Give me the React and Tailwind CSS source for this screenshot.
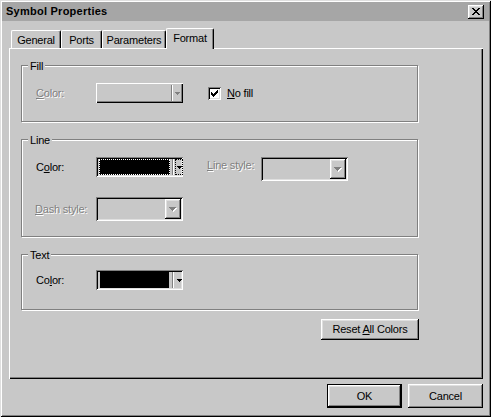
import React from "react";

const RAISED =
  "shadow-[inset_-1px_-1px_0_#000,inset_1px_1px_0_#fff,inset_-2px_-2px_0_#808080,inset_2px_2px_0_#dfdfdf]";
const SUNKEN =
  "shadow-[inset_1px_1px_0_#808080,inset_-1px_-1px_0_#fff,inset_2px_2px_0_#000,inset_-2px_-2px_0_#dfdfdf]";
const DIS = "text-[#808080] [text-shadow:1px_1px_0_#fff]";

function SmallArrow({ color = "#000" }) {
  return (
    <svg width="5" height="3" viewBox="0 0 5 3" shapeRendering="crispEdges" className="block">
      <path d="M0 0h5v1h-5z M1 1h3v1h-3z M2 2h1v1h-1z" fill={color} />
    </svg>
  );
}

function BigArrowDisabled() {
  const d = "M0 0h7v1h-7z M1 1h5v1h-5z M2 2h3v1h-3z M3 3h1v1h-1z";
  return (
    <svg width="8" height="5" viewBox="0 0 8 5" shapeRendering="crispEdges" className="block">
      <path d={d} fill="#fff" transform="translate(1 1)" />
      <path d={d} fill="#808080" />
    </svg>
  );
}

function ColorCombo({ focused }) {
  return (
    <div className={`w-[87px] h-[20px] ${SUNKEN} flex items-center`}>
      <div
        className={`ml-[3px] w-[71px] h-[16px] bg-black ${
          focused ? "border border-dotted border-white" : "border border-[#c8c8c8] border-y-0"
        }`}
      />
      <div className="ml-[2px] w-[2px] h-[16px] border-l border-l-[#808080] border-r border-r-white" />
      <div
        className={`ml-[1px] h-[16px] w-[8px] flex items-center justify-center ${
          focused ? "border border-dotted border-black" : ""
        }`}
      >
        <SmallArrow />
      </div>
    </div>
  );
}

function DisabledColorCombo() {
  return (
    <div className="w-[87px] h-[20px] shadow-[inset_1px_1px_0_#fff,inset_-1px_-1px_0_#000,inset_-2px_-2px_0_#808080] flex items-center">
      <div className="ml-[75px] w-[2px] h-[16px] border-l border-l-[#808080] border-r border-r-white" />
      <div className="ml-[2px]">
        <SmallArrow color="#808080" />
      </div>
    </div>
  );
}

function StdCombo() {
  return (
    <div className={`w-[87px] h-[24px] ${SUNKEN} p-[2px] flex justify-end`}>
      <div className={`w-[16px] h-full ${RAISED} flex items-center justify-center`}>
        <BigArrowDisabled />
      </div>
    </div>
  );
}

function Group({ label, h, pt, children }) {
  return (
    <div
      className="relative w-[397px] border border-[#808080] shadow-[inset_1px_1px_0_#fff,1px_1px_0_#fff]"
      style={{ height: h, paddingTop: pt }}
    >
      <div className="absolute -top-[6px] left-[6px] px-[2px] bg-[#c8c8c8] leading-[12px]">{label}</div>
      {children}
    </div>
  );
}

function Button({ children, def, w = 75, h = 23 }) {
  return (
    <div
      className={`flex items-center justify-center ${def ? "border border-black" : ""} ${RAISED}`}
      style={{ width: w, height: h }}
    >
      {children}
    </div>
  );
}

function Tab({ label, w, selected }) {
  return (
    <div
      className={`flex items-center justify-center border-l border-t border-l-white border-t-white border-r border-r-black shadow-[inset_-1px_0_0_#808080] rounded-t-[2px] bg-[#c8c8c8] ${
        selected ? "h-[21px] -mb-[1px] relative z-10 pb-[2px]" : "h-[18px] pt-[1px]"
      }`}
      style={{ width: w }}
    >
      {label}
    </div>
  );
}

function CheckBox() {
  return (
    <div className={`w-[13px] h-[13px] bg-white ${SUNKEN} flex items-center justify-center`}>
      <svg width="7" height="7" viewBox="0 0 7 7" shapeRendering="crispEdges" className="block">
        <path
          d="M6 0h1v1h-1z M5 1h2v1h-2z M0 2h1v1h-1z M4 2h3v1h-3z M0 3h2v1h-2z M3 3h3v1h-3z M0 4h5v1h-5z M1 5h3v1h-3z M2 6h1v1h-1z"
          fill="#000"
        />
      </svg>
    </div>
  );
}

export default function App() {
  return (
    <div className="w-[491px] h-[417px] bg-[#c8c8c8] p-[2px] flex flex-col font-['Liberation_Sans',Arial,sans-serif] text-[11px] tracking-[-0.2px] text-black shadow-[inset_1px_1px_0_#dfdfdf,inset_-1px_-1px_0_#000,inset_2px_2px_0_#fff,inset_-2px_-2px_0_#808080] select-none">
      {/* Title bar */}
      <div className="h-[19px] bg-[#a6a6a6] flex items-center justify-between pl-[4px] pr-[5px]">
        <span className="font-bold text-[11px] tracking-[0.25px]">Symbol Properties</span>
        <div className={`w-[16px] h-[14px] ${RAISED} bg-[#c8c8c8] flex items-center justify-center`}>
          <svg width="8" height="7" viewBox="0 0 8 7" shapeRendering="crispEdges" className="block">
            <path
              d="M0 0h2v1h-2z M6 0h2v1h-2z M1 1h2v1h-2z M5 1h2v1h-2z M2 2h4v1h-4z M3 3h2v1h-2z M2 4h4v1h-4z M1 5h2v1h-2z M5 5h2v1h-2z M0 6h2v1h-2z M6 6h2v1h-2z"
              fill="#000"
            />
          </svg>
        </div>
      </div>

      {/* Body */}
      <div className="pl-[7px] pt-[7px] w-[481px]">
        <div className="h-[20px] flex items-end pl-[2px]">
          <Tab label="General" w={50} />
          <Tab label="Ports" w={41} />
          <Tab label="Parameters" w={64} />
          <Tab label="Format" w={48} selected />
        </div>

        <div className="w-[474px] h-[331px] bg-[#c8c8c8] shadow-[inset_1px_1px_0_#fff,inset_-1px_-1px_0_#000,inset_-2px_-2px_0_#808080] pl-[12px] pt-[17px]">
          <div className="w-[398px] flex flex-col">
            <Group label="Fill" h={57} pt={17}>
              <div className="flex items-center pl-[14px]">
                <span className={`w-[60px] ${DIS}`}>
                  <u>C</u>olor:
                </span>
                <DisabledColorCombo />
                <div className="ml-[25px]">
                  <CheckBox />
                </div>
                <span className="ml-[6px]">
                  <u>N</u>o fill
                </span>
              </div>
            </Group>

            <div className="mt-[17px]">
              <Group label="Line" h={98} pt={17}>
                <div className="flex items-start pl-[14px]">
                  <span className="w-[60px] leading-[20px]">
                    C<u>o</u>lor:
                  </span>
                  <ColorCombo focused />
                  <span className={`ml-[24px] w-[54px] leading-[17px] ${DIS}`}>
                    <u>L</u>ine style:
                  </span>
                  <StdCombo />
                </div>
                <div className="flex items-center pl-[13px] mt-[16px]">
                  <span className={`w-[61px] ${DIS}`}>
                    <u>D</u>ash style:
                  </span>
                  <StdCombo />
                </div>
              </Group>
            </div>

            <div className="mt-[17px]">
              <Group label="Text" h={56} pt={15}>
                <div className="flex items-center pl-[14px]">
                  <span className="w-[60px]">
                    Co<u>l</u>or:
                  </span>
                  <ColorCombo />
                </div>
              </Group>
            </div>

            <div className="mt-[9px] self-end">
              <Button w={98} h={21}>
                <span>
                  Reset <u>A</u>ll Colors
                </span>
              </Button>
            </div>
          </div>
        </div>

        <div className="w-[474px] mt-[5px] flex justify-end gap-[6px]">
          <Button def w={75} h={24}>
            OK
          </Button>
          <Button w={75} h={24}>
            Cancel
          </Button>
        </div>
      </div>
    </div>
  );
}
